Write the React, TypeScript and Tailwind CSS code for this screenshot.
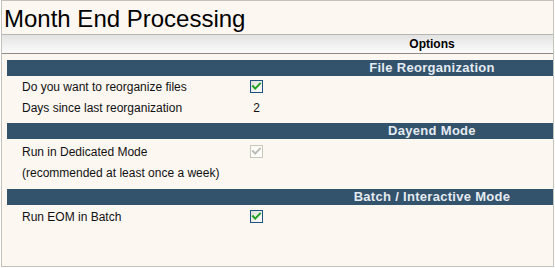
import React from "react";

function Check({ disabled }: { disabled?: boolean }) {
  return (
    <svg width="13" height="13" viewBox="0 0 13 13" className="block">
      <defs>
        <linearGradient id={disabled ? "gd" : "gc"} x1="0" y1="0" x2="1" y2="1">
          <stop offset="0" stopColor={disabled ? "#fbfaf6" : "#dcdcd4"} />
          <stop offset="1" stopColor="#ffffff" />
        </linearGradient>
      </defs>
      <rect x="0.5" y="0.5" width="12" height="12" fill={`url(#${disabled ? "gd" : "gc"})`} stroke={disabled ? "#cac8bb" : "#1c5180"} />
      <path
        d="M3 6.2 L5.2 8.6 L10 3.6"
        fill="none"
        stroke={disabled ? "#bdbdb6" : "#21a121"}
        strokeWidth="2"
        strokeLinecap="square"
      />
    </svg>
  );
}

function Bar({ title }: { title: string }) {
  return (
    <div className="ml-[5px] flex h-[16px] bg-[#33526b]">
      <div className="flex-1" />
      <div className="w-[242px] text-center text-[13px] font-bold leading-[16px] tracking-[0.3px] text-[#e4ebf2]">
        {title}
      </div>
    </div>
  );
}

function Row({ label, children }: { label: string; children?: React.ReactNode }) {
  return (
    <div className="flex h-[21px] items-center">
      <div className="w-[248px] pl-[20px] text-[12px] text-[#111]">{label}</div>
      <div className="flex w-[13px] justify-center text-[12px] text-[#111]">{children}</div>
    </div>
  );
}

export default function App() {
  return (
    <div
      className="h-[268px] w-[555px] bg-white"
      style={{ fontFamily: '"Liberation Sans", Arial, sans-serif' }}
    >
      <div className="ml-px h-[267px] w-[553px] border border-[#c4c2bd] bg-[#fcf7f1]">
        <div className="h-[33px] pl-[2px] pt-[4px] text-[24px] leading-[28px] text-black">
          Month End Processing
        </div>
        <div className="flex h-[20px] border-b border-t border-b-[#8f8a84] border-t-[#b8b6b2] bg-gradient-to-b from-[#e3e3e3] to-[#fbfbfb]">
          <div className="flex-1" />
          <div className="w-[242px] text-center text-[12px] font-bold leading-[18px] text-black">Options</div>
        </div>
        <div className="h-[6px]" />
        <Bar title="File Reorganization" />
        <div className="h-[47px]">
          <Row label="Do you want to reorganize files">
            <Check />
          </Row>
          <Row label="Days since last reorganization">
            <span>2</span>
          </Row>
        </div>
        <Bar title="Dayend Mode" />
        <div className="h-[50px] pt-[2px]">
          <Row label="Run in Dedicated Mode">
            <Check disabled />
          </Row>
          <Row label="(recommended at least once a week)" />
        </div>
        <Bar title="Batch / Interactive Mode" />
        <div className="pt-[1px]">
          <Row label="Run EOM in Batch">
            <Check />
          </Row>
        </div>
      </div>
    </div>
  );
}
